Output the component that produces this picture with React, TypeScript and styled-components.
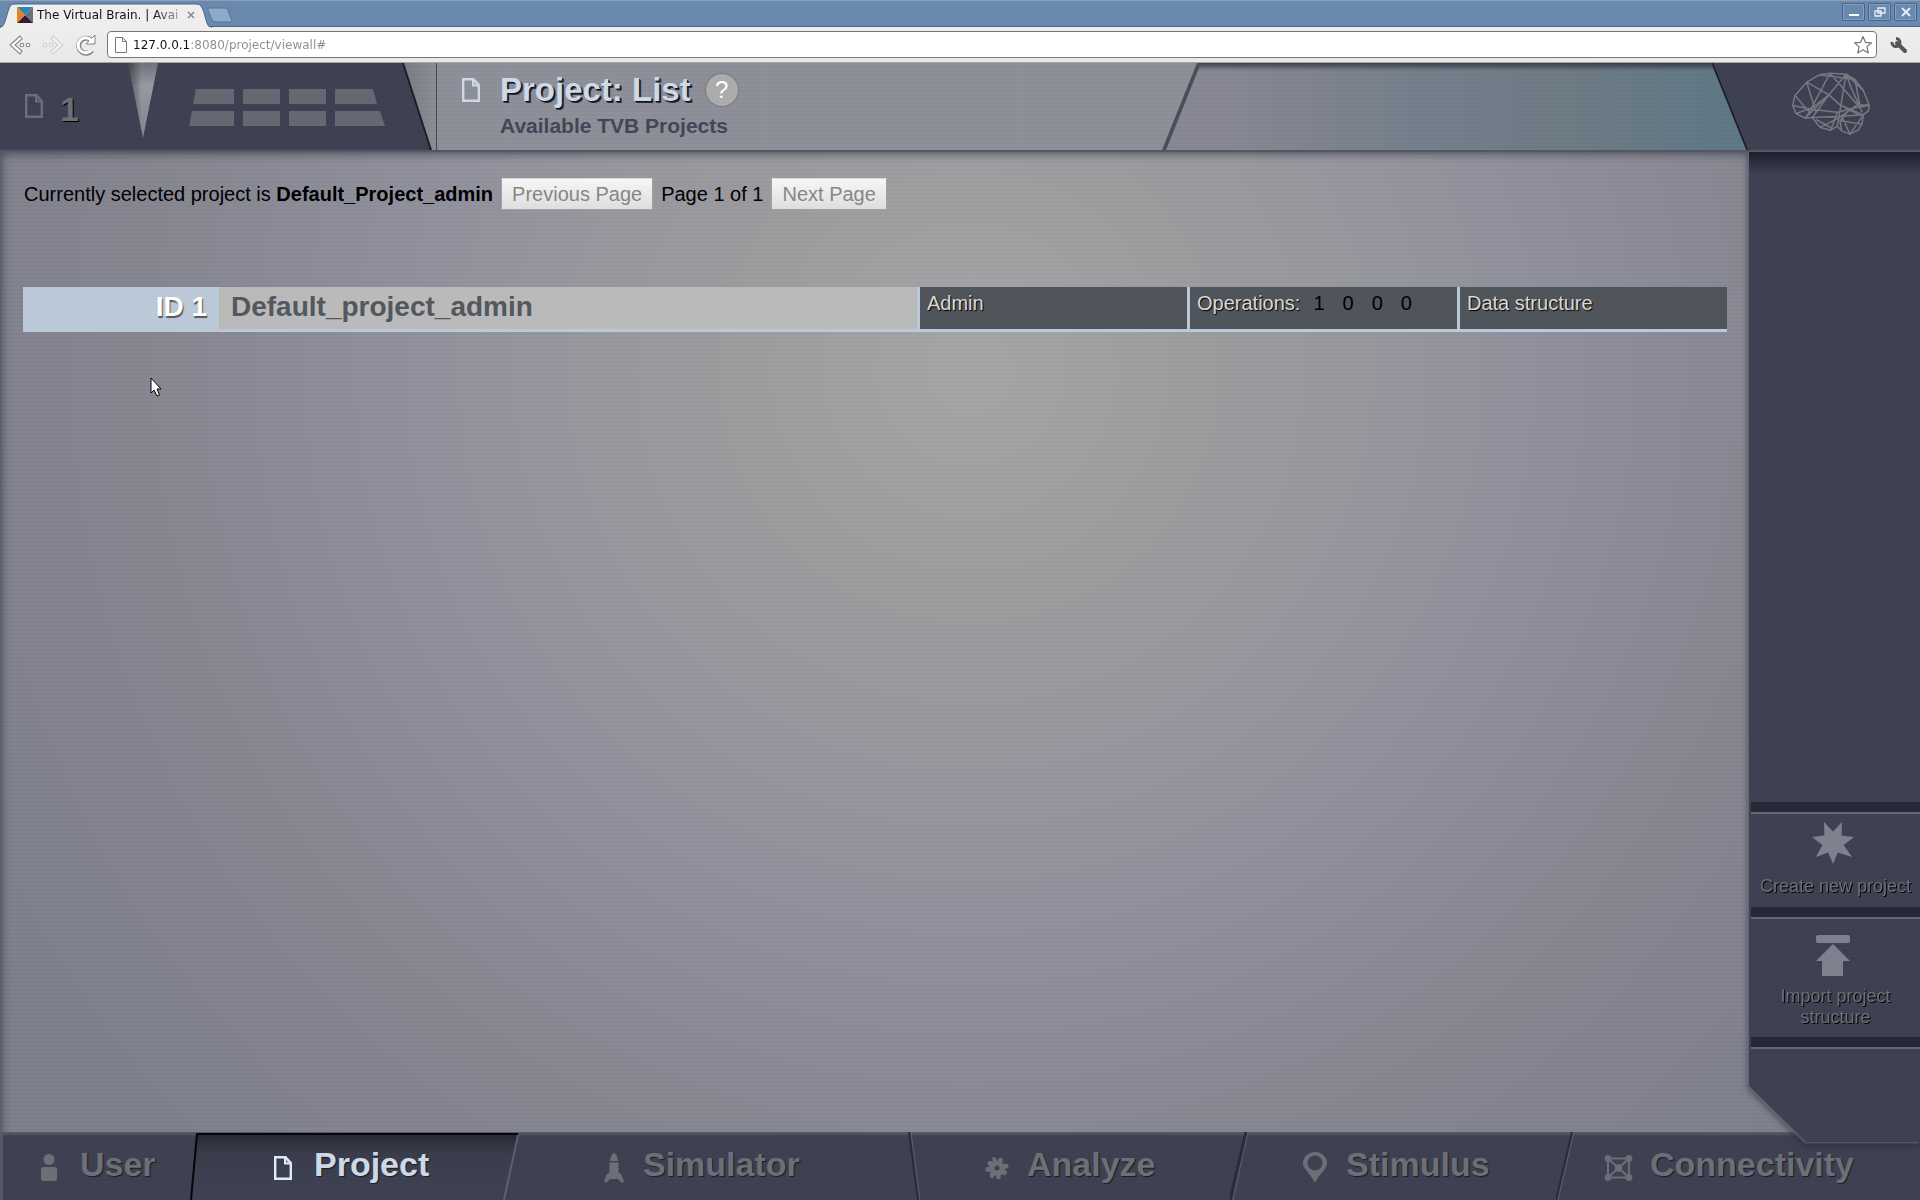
import React from 'react';
import styled, { createGlobalStyle, css } from 'styled-components';

const ink = '#3f4253';
const dim = '#6b6f76';
const pale = '#cdd9e6';

const stripes =
  'repeating-linear-gradient(180deg, rgba(0, 0, 0, 0.04) 0, rgba(0, 0, 0, 0) 2px, rgba(0, 0, 0, 0.04) 4px)';

const GlobalStyle = createGlobalStyle`
  *, *::before, *::after { box-sizing: border-box; }
  body {
    margin: 0;
    font-family: "Liberation Sans", Arial, sans-serif;
    background: ${ink};
  }
  h1, h2, h3, p, ul { margin: 0; padding: 0; }
  ul { list-style: none; }
  button {
    font: inherit;
    color: inherit;
    background: none;
    border: 0;
    padding: 0;
    cursor: pointer;
  }
  a { color: inherit; text-decoration: none; }
`;

const Screen = styled.div`
  display: flex;
  flex-direction: column;
  min-height: 100vh;
  overflow: hidden;
`;

/* ---------- browser frame ---------- */

const TabStrip = styled.div`
  display: flex;
  align-items: flex-start;
  height: 27px;
  padding-top: 2px;
  background: #6a89af;
  border-top: 1px solid #8fa0b6;
  border-bottom: 1px solid #4b6688;
  font-family: "DejaVu Sans", sans-serif;
`;

const Tab = styled.div`
  position: relative;
  display: flex;
  align-items: center;
  gap: 4px;
  width: 212px;
  height: 25px;
  margin-bottom: -1px;
  padding: 0 15px 2px 17px;
  font-size: 12px;
  color: #111;
`;

const TabShape = styled.svg`
  position: absolute;
  inset: 0;
`;

const TabTitle = styled.span`
  position: relative;
  flex: 1;
  white-space: nowrap;
  mask-image: linear-gradient(90deg, #000 80%, rgba(0, 0, 0, 0.3));
`;

const TabIcon = styled.svg`
  position: relative;
  flex: none;
`;

const TabClose = styled.button`
  position: relative;
  display: flex;
  width: 12px;
`;

const NewTab = styled.button`
  margin: 4px 0 0 -5px;
  display: flex;
`;

const WindowButtons = styled.div`
  display: flex;
  gap: 3px;
  margin: 0 3px 0 auto;
`;

const WindowButton = styled.button`
  display: grid;
  place-items: center;
  width: 23px;
  height: 18px;
  border: 1px solid #46648c;
  border-radius: 2px;
  box-shadow: inset 0 0 0 1px #84a0c2;
`;

const Toolbar = styled.div`
  display: flex;
  align-items: center;
  height: 36px;
  padding: 0 12px 0 8px;
  background: linear-gradient(#efeeed, #e9e8e7);
  border-bottom: 1px solid #a5a5a5;
`;

const ToolButton = styled.button`
  display: flex;
  width: 24px;
  margin-right: 9px;
`;

const AddressBar = styled.form`
  display: flex;
  align-items: center;
  gap: 6px;
  flex: 1;
  height: 27px;
  padding: 0 3px 0 7px;
  background: #fff;
  border: 1px solid #77777a;
  border-radius: 4px;
`;

const AddressField = styled.div`
  flex: 1;
  font: 12px/20px "DejaVu Sans", sans-serif;
`;

const AddressText = styled.input`
  display: block;
  width: 100%;
  padding: 0;
  border: 0;
  outline: 0;
  background: linear-gradient(90deg, #111 57px, #8b8b8b 57px);
  background-clip: text;
  -webkit-background-clip: text;
  color: transparent;
  font: inherit;
`;

const WrenchButton = styled.button`
  display: flex;
  margin-left: 13px;
`;

/* ---------- application header ---------- */

const Header = styled.header`
  position: relative;
  z-index: 2;
  display: flex;
  height: 89px;
  background: ${stripes}, ${ink};
  border-bottom: 2px solid #535765;
`;

const CurrentProject = styled.a`
  display: flex;
  align-items: center;
  gap: 17px;
  width: 128px;
  padding: 4px 0 0 25px;
  font: bold 34px/40px "Liberation Sans", Arial, sans-serif;
  color: ${dim};
  text-shadow: 1px 1px 0 #000;

  svg { margin-bottom: 6px; }
`;

const Wedge = styled.div`
  width: 30px;
  height: 75px;
  background: linear-gradient(90deg, rgba(50, 50, 55, 0.7), transparent 45%), linear-gradient(#70717b, #9698a3 30%, #81838d);
  clip-path: polygon(0 0, 100% 0, 50% 100%);
`;

const TileMap = styled.a`
  width: 244px;
  padding: 26px 0 0 30px;
`;

const LightPanel = styled.div`
  flex: 1;
  display: flex;
  background: #1c1d25;
  clip-path: polygon(0 0, calc(100% - 35px) 0, 100% 100%, 28px 100%);
`;

const LightInner = styled.div`
  flex: 1;
  display: flex;
  background: ${stripes}, linear-gradient(90deg, #7b7d86, #8f919b 40px);
  clip-path: polygon(2px 0, calc(100% - 37px) 0, calc(100% - 2px) 100%, 30px 100%);
`;

const TitleBlock = styled.div`
  display: flex;
  flex: 1;
  align-items: flex-start;
  gap: 20px;
  margin-left: 34px;
  padding: 11px 0 0 25px;
  border-left: 1px solid #454858;

  > svg { margin-top: 4px; }
`;

const DocIcon = styled.svg`
  position: relative;
  flex: none;
`;

const TitleRow = styled.div`
  display: flex;
  align-items: center;
  gap: 15px;
`;

const PageTitle = styled.h1`
  font-size: 33px;
  line-height: 32px;
  color: ${pale};
  text-shadow: 1px 1px 0 #111, 2px 2px 0 #2a2d38;
`;

const HelpButton = styled.button`
  width: 32px;
  height: 32px;
  border-radius: 50%;
  background: #acacac;
  box-shadow: 0 0 1px 1px #777a80;
  font-size: 24px;
  line-height: 32px;
  color: #fff;
`;

const Subtitle = styled.p`
  margin-top: 8px;
  font-size: 21px;
  line-height: 24px;
  font-weight: bold;
  color: #434656;
`;

const StatusPane = styled.div`
  width: 586px;
  background: #4b4e56;
  clip-path: polygon(35px 0, 100% 0, 100% 100%, 0 100%);
`;

const StatusGlow = styled.div`
  height: 100%;
  background:
    linear-gradient(rgba(40, 42, 50, 0.75), transparent 8px),
    ${stripes},
    linear-gradient(90deg, #898a95 60px, #80858f 160px, #75818d 260px, #6e7c86 420px, #5f7a88);
  clip-path: polygon(39px 0, 100% 0, 100% 100%, 4px 100%);
`;

const BrainPane = styled.a`
  width: 172px;
  padding: 7px 0 0 42px;
`;

/* ---------- content ---------- */

const Workspace = styled.div`
  flex: 1;
  display: flex;
  margin-top: -2px;
  background:
    ${stripes},
    radial-gradient(1150px 1150px at 970px 220px, #a8a8aa, #9e9ea1 22%, #9393a0 48%, #888893 72%, #7f818e);
`;

const Content = styled.main`
  position: relative;
  flex: 1;
  min-width: 0;
  padding: 28px 22px 0 23px;
  box-shadow: inset 8px 10px 8px -6px rgba(40, 42, 55, 0.6);
`;

const PagerRow = styled.div`
  display: flex;
  align-items: center;
  gap: 8px;
  padding-left: 1px;
  font-size: 20px;
  line-height: 24px;
  color: #000;
`;

const PagerButton = styled.button`
  height: 32px;
  padding: 0 10px;
  border: 1px solid #a2a2a2;
  border-top-color: #d8d8d8;
  background: linear-gradient(#f6f6f6, #dedede);
  color: #868686;
`;

const ProjectRow = styled.div`
  display: grid;
  grid-template-columns: 196px minmax(0, 1fr) 270px 270px 270px;
  height: 45px;
  margin-top: 77px;
  border-bottom: 3px solid #bac8d7;
`;

const ProjectId = styled.div`
  padding: 4px 12px 0 0;
  margin-bottom: -3px;
  background: #bac8d7;
  font-size: 28px;
  line-height: 32px;
  font-weight: bold;
  text-align: right;
  color: #fff;
  text-shadow: 1px 2px 1px #555;
`;

const ProjectName = styled.h2`
  padding: 4px 12px 0;
  background: #bababa;
  font-size: 28px;
  line-height: 32px;
  color: #53575e;
`;

const ProjectCell = styled.div`
  display: flex;
  gap: 13px;
  padding: 4px 0 0 7px;
  border-left: 3px solid #bac8d7;
  background: #50545b;
  font-size: 20px;
  line-height: 24px;
  color: #d8d8d8;
  text-shadow: 1px 1px 1px #000;
`;

const Counts = styled.ul`
  display: flex;
  gap: 18px;
  color: #000;
  text-shadow: none;
`;

const Pointer = styled.svg`
  position: absolute;
  left: 150px;
  top: 227px;
`;

/* ---------- action column ---------- */

const Actions = styled.aside`
  position: relative;
  z-index: 1;
  display: flex;
  flex-direction: column;
  width: 171px;
  margin-bottom: -10px;
  filter: drop-shadow(-1px 1px 1px #666976) drop-shadow(0 2px 3px rgba(20, 20, 30, 0.5));
`;

const ActionsShape = styled.div`
  display: flex;
  flex: 1;
  flex-direction: column;
  justify-content: flex-end;
  padding-bottom: 93px;
  background:
    linear-gradient(rgba(10, 12, 20, 0.7), transparent 24px),
    ${stripes},
    ${ink};
  clip-path: polygon(0 0, 100% 0, 100% 100%, 57px 100%, 0 calc(100% - 56px));
`;

const Action = styled.button<{ $tall?: boolean }>`
  display: flex;
  flex-direction: column;
  align-items: center;
  height: ${(p) => (p.$tall ? 120 : 105)}px;
  margin-left: 2px;
  padding: ${(p) => (p.$tall ? 16 : 8)}px 0 0;
  border-top: 2px solid #646877;
  box-shadow: 0 -10px 0 #252835;
  font-size: 18px;
  line-height: 21px;
  color: ${dim};
  text-shadow: 1px 1px 0 #000;

  svg { margin-right: 5px; }
`;

const ActionLabel = styled.span<{ $gap: number }>`
  margin-top: ${(p) => p.$gap}px;
  padding: 0 8px;
`;

const ActionsEnd = styled.div`
  height: 12px;
  margin-left: 2px;
  background: #252835;
  border-bottom: 2px solid #646877;
`;

/* ---------- bottom navigation ---------- */

const BottomNav = styled.nav`
  display: flex;
  height: 68px;
  background: linear-gradient(#5a5e6c, #4a4d5c 3px, ${ink} 4px);
  border-left: 3px solid #555968;
`;

const NavItem = styled.a<{ $width?: number; $pad: number; $gap: number; $active?: boolean }>`
  position: relative;
  display: flex;
  align-items: center;
  gap: ${(p) => p.$gap}px;
  ${(p) => (p.$width ? css`width: ${p.$width}px;` : css`flex: 1;`)}
  padding: 0 0 4px ${(p) => p.$pad}px;
  background: ${stripes};
  font-size: 34px;
  line-height: 40px;
  font-weight: bold;
  color: ${(p) => (p.$active ? pale : dim)};
  text-shadow: 1px 1px 1px #1a1c24;
`;

const ActivePlate = styled.svg`
  position: absolute;
  left: -7px;
  top: 0;
`;

const Divider = styled.svg<{ $w: number }>`
  position: absolute;
  right: -${(p) => p.$w}px;
  top: 0;
`;

const NavGlyph = styled.span`
  position: relative;
  display: flex;
  flex: none;
  margin-top: 7px;
`;

const NavLabel = styled.span`
  position: relative;
`;

function Page({ color = dim }: { color?: string }) {
  return (
    <DocIcon width="18" height="24" viewBox="0 0 18 24" fill="none" stroke={color} strokeWidth="2.4">
      <path d="M1.2 1.2H11.500L16.800 7V22.800H1.200Z" />
      <path d="M11 1V7.500H17" strokeWidth="2" />
      <path d="M11 1 17 7.500H11Z" fill={color} fillOpacity=".4" stroke="none" />
    </DocIcon>
  );
}

function Brain() {
  return (
    <svg width="82" height="67" viewBox="30 24 246 200" fill="none" stroke="#757980" strokeWidth="4.5" strokeLinejoin="round">
      <path d="M38 130 45 100 80 60 118 38 150 33 198 36 225 52 250 85 268 130 265 146 250 158 246 186 234 204 210 216 185 206 172 192 152 204 120 195 97 166 75 168 48 154Z" />
      <path d="M45 100 88 150 150 33M80 60 147 98 180 128 236 158M80 60 108 150M118 38 225 52M150 33 232 128 268 130M198 36 147 98 75 168M198 36 187 104 172 192M198 36 250 85M198 36 214 78 246 150M225 52 240 132M147 98 97 166M38 130 98 142 172 150 268 126M48 154 98 136 147 98M88 150 75 168M97 166 185 162 250 158M232 128 172 170 120 195M172 150 152 204M180 128 250 158 210 216M185 162 210 216M246 186 180 176M268 130 210 140 180 176 185 206M108 172 152 196" />
    </svg>
  );
}

export default function App() {
  return (
    <Screen>
      <GlobalStyle />
      <TabStrip>
        <Tab>
          <TabShape width="212" height="25" viewBox="0 0 212 25">
            <path d="M0 25C6 24 7 6 11 2Q12 1 16 1H196Q200 1 201 3C206 10 205 24 212 25Z" fill="#efeeed" stroke="#47658c" />
            <path d="M1 25H211" stroke="#efeeed" strokeWidth="2" />
          </TabShape>
          <TabIcon width="16" height="16" viewBox="0 0 16 16">
            <path d="M0 0H16L8 8Z" fill="#2f86ae" />
            <path d="M16 0V16L8 8Z" fill="#5f7485" />
            <path d="M0 16H16L8 8Z" fill="#3c1634" />
            <path d="M0 0V16L8 8Z" fill="#e08327" />
          </TabIcon>
          <TabTitle>The Virtual Brain. | Avai</TabTitle>
          <TabClose aria-label="Close tab">
            <svg width="12" height="8" viewBox="0 0 12 8" stroke="#8c8c8c" strokeWidth="1.6">
              <path d="M3 1l6 6M9 1l-6 6" />
            </svg>
          </TabClose>
        </Tab>
        <NewTab aria-label="New tab">
          <svg width="26" height="16" viewBox="0 0 26 16">
            <path d="M2 1H18Q20 1 21 3L25 14Q25 15 23 15H8Q6 15 5 13L1 3Q0 1 2 1Z" fill="#8fa9cb" stroke="#557299" />
          </svg>
        </NewTab>
        <WindowButtons>
          <WindowButton aria-label="Minimize">
            <svg width="12" height="10"><path d="M1 8h10" stroke="#fff" strokeWidth="2" /></svg>
          </WindowButton>
          <WindowButton aria-label="Restore">
            <svg width="12" height="10" fill="none" stroke="#e8f0fa" strokeWidth="1.3"><path d="M4 1h7v5H4zM1 4h6v5H1z" /></svg>
          </WindowButton>
          <WindowButton aria-label="Close">
            <svg width="12" height="10" stroke="#e8f0fa" strokeWidth="1.8"><path d="M2 1l8 8M10 1L2 9" /></svg>
          </WindowButton>
        </WindowButtons>
      </TabStrip>
      <Toolbar>
        <ToolButton aria-label="Back">
          <svg width="24" height="22" fill="#fff" stroke="#858585" strokeWidth="1.1">
            <path d="M12 2 2 11 12 20 14 17 7 11 14 5Z" />
            <circle cx="14" cy="11" r="1.8" /><circle cx="20" cy="11" r="1.8" />
          </svg>
        </ToolButton>
        <ToolButton aria-label="Forward">
          <svg width="24" height="22" fill="#f4f4f4" stroke="#cfcfcf" strokeWidth="1.1">
            <path d="M12 2 22 11 12 20 10 17 17 11 10 5Z" />
            <circle cx="4" cy="11" r="1.8" /><circle cx="10" cy="11" r="1.8" />
          </svg>
        </ToolButton>
        <ToolButton aria-label="Reload">
          <svg width="24" height="22" fill="none">
            <path d="M18 16.500A7.500 7.500 0 1 1 17 6" stroke="#858585" strokeWidth="5" />
            <path d="M21 1V10H12Z" fill="#fff" stroke="#858585" />
            <path d="M17.500 16A7.500 7.500 0 1 1 17.500 6.500" stroke="#fff" strokeWidth="3" />
          </svg>
        </ToolButton>
        <AddressBar>
          <svg width="12" height="16" fill="#fff" stroke="#777"><path d="M.5 .5H7.500L11.500 4.500V15.500H.5ZM7.500 .5V4.500H11.500" /></svg>
          <AddressField>
            <AddressText aria-label="Address" defaultValue="127.0.0.1:8080/project/viewall#" />
          </AddressField>
          <svg width="20" height="20" viewBox="0 0 20 20" fill="#fff" stroke="#777" strokeWidth="1.2" strokeLinejoin="round">
            <path d="M10 1.500 12.400 7.300 18.500 7.800 13.900 11.900 15.300 18 10 14.800 4.700 18 6.100 11.900 1.500 7.800 7.600 7.300Z" />
          </svg>
        </AddressBar>
        <WrenchButton aria-label="Settings">
          <svg width="18" height="18" viewBox="0 0 18 18" fill="none" stroke="#555">
            <path d="M7 7 15 15" strokeWidth="4" strokeLinecap="round" />
            <path d="M6 2.500A4 4 0 1 1 2 6" strokeWidth="3" />
          </svg>
        </WrenchButton>
      </Toolbar>

      <Header>
        <CurrentProject href="#project">
          <Page />
          <span>1</span>
        </CurrentProject>
        <Wedge />
        <TileMap href="#map" aria-label="Work pages">
          <svg width="200" height="38" viewBox="188 89 200 38" fill="#646870">
            <path d="M196 89H234V104H193ZM243 89H280V104H243ZM289 89H326V104H289ZM335 89H373L377 104H335Z" />
            <path d="M192 111H234V126H189ZM243 111H280V126H243ZM289 111H326V126H289ZM335 111H380L385 126H335Z" />
          </svg>
        </TileMap>
        <LightPanel>
          <LightInner>
            <TitleBlock>
              <Page color={pale} />
              <div>
                <TitleRow>
                  <PageTitle>Project: List</PageTitle>
                  <HelpButton aria-label="Help">?</HelpButton>
                </TitleRow>
                <Subtitle>Available TVB Projects</Subtitle>
              </div>
            </TitleBlock>
            <StatusPane>
              <StatusGlow />
            </StatusPane>
          </LightInner>
        </LightPanel>
        <BrainPane href="#about" aria-label="About">
          <Brain />
        </BrainPane>
      </Header>

      <Workspace>
        <Content>
          <PagerRow>
            <p>Currently selected project is <b>Default_Project_admin</b></p>
            <PagerButton>Previous Page</PagerButton>
            <span>Page 1 of 1</span>
            <PagerButton>Next Page</PagerButton>
          </PagerRow>
          <ProjectRow>
            <ProjectId>ID 1</ProjectId>
            <ProjectName><a href="#p1">Default_project_admin</a></ProjectName>
            <ProjectCell>Admin</ProjectCell>
            <ProjectCell>
              <span>Operations:</span>
              <Counts>
                <li>1</li>
                <li>0</li>
                <li>0</li>
                <li>0</li>
              </Counts>
            </ProjectCell>
            <ProjectCell><a href="#data">Data structure</a></ProjectCell>
          </ProjectRow>
          <Pointer width="12" height="21" viewBox="0 0 12 21">
            <path d="M1 1V16L4 13 7 19 9.500 18 7 12H11Z" fill="#fff" stroke="#000" />
          </Pointer>
        </Content>
        <Actions>
          <ActionsShape>
            <Action>
              <svg width="42" height="42" viewBox="0 0 42 42" fill="#7e818d">
                <path d="M21 42 16.200 30.400 4 35 10.300 23 0 15 12.400 13.600 12 0 21 9.500 30 0 29.600 13.600 42 15 31.700 23 40 35 25.800 30.400Z" />
              </svg>
              <ActionLabel $gap={12}>Create new project</ActionLabel>
            </Action>
            <Action $tall>
              <svg width="34" height="41" viewBox="0 0 34 41" fill="#7e818d">
                <rect width="34" height="8" rx="2" />
                <path d="M17 9 34 26H27V41H6V26H0Z" />
              </svg>
              <ActionLabel $gap={10}>Import project structure</ActionLabel>
            </Action>
            <ActionsEnd />
          </ActionsShape>
        </Actions>
      </Workspace>

      <BottomNav>
        <NavItem href="#user" $width={194} $pad={37} $gap={22}>
          <NavGlyph>
            <svg width="18" height="27" viewBox="0 0 18 27" fill={dim}>
              <circle cx="9" cy="5.500" r="5.500" />
              <rect y="13" x="1" width="16" height="14" rx="2.500" />
            </svg>
          </NavGlyph>
          <NavLabel>User</NavLabel>
        </NavItem>
        <NavItem href="#project" $active $width={313} $pad={77} $gap={22}>
          <ActivePlate width="331" height="68" viewBox="190 0 331 68" fill="none">
            <defs>
              <linearGradient id="plate" x1="0" y1="0" x2="0" y2="1">
                <stop offset="0" stopColor="#26262e" />
                <stop offset=".3" stopColor="#34353f" stopOpacity=".4" />
                <stop offset="1" stopColor="#3f4253" stopOpacity="0" />
              </linearGradient>
            </defs>
            <path d="M197 2H518L504 68H191Z" fill="url(#plate)" />
            <path d="M191 68 197 2H518" stroke="#05050a" strokeWidth="2" />
            <path d="M518 3 504 68" stroke="#5e6270" strokeWidth="2" />
          </ActivePlate>
          <NavGlyph>
            <Page color="#dfeaf5" />
          </NavGlyph>
          <NavLabel>Project</NavLabel>
        </NavItem>
        <NavItem href="#simulator" $width={402} $pad={93} $gap={18}>
          <NavGlyph>
            <svg width="22" height="30" viewBox="0 0 22 30" fill={dim}>
              <path d="M7 7Q8 1 11 0 14 1 15 7V8H7ZM6.500 9.500H15.500V19L18.500 22 21 28.500 19 30 15 26H7L3 30 1 28.500 3.500 22 6.500 19Z" />
            </svg>
          </NavGlyph>
          <NavLabel>Simulator</NavLabel>
          <Divider $w={8} width="14" height="68" fill="none"><path d="M3 0 12 68" stroke="#2a2c38" strokeWidth="2" /><path d="M5 0 14 68" stroke="#5e6270" /></Divider>
        </NavItem>
        <NavItem href="#analyze" $width={330} $pad={73} $gap={18}>
          <NavGlyph>
            <svg width="24" height="24" viewBox="0 0 24 24" fill={dim}>
              <path
                fillRule="evenodd"
                d="M7 1 11 2 12.500 5.500 14.500 1.500 18 2.500 17 7.500 23 8 23.500 12 19.500 13 22.500 16.500 20 19.500 16 18 15.500 23 12 23.500 10.500 19 7.500 22.500 4.500 20.500 5.500 16 .5 15.500 .5 11.500 4.500 10.500 2 7 4.500 4.500 8 6ZM12 9.500A2.500 2.500 0 1 0 12 14.500 2.500 2.500 0 1 0 12 9.500Z"
              />
            </svg>
          </NavGlyph>
          <NavLabel>Analyze</NavLabel>
          <Divider $w={6} width="18" height="68" fill="none"><path d="M16 0 0 68" stroke="#2a2c38" strokeWidth="3" /><path d="M18 0 3 68" stroke="#5e6270" /></Divider>
        </NavItem>
        <NavItem href="#stimulus" $width={327} $pad={60} $gap={18}>
          <NavGlyph>
            <svg width="26" height="31" viewBox="0 0 26 31" fill={dim}>
              <path
                fillRule="evenodd"
                d="M13 0C20 0 25 5 25 11 25 17 18 21 13 31 8 21 1 17 1 11 1 5 6 0 13 0ZM13 3.500A7.500 7.500 0 1 0 13 18.500 7.500 7.500 0 1 0 13 3.500Z"
              />
            </svg>
          </NavGlyph>
          <NavLabel>Stimulus</NavLabel>
          <Divider $w={5} width="18" height="68" fill="none"><path d="M16 0 0 68" stroke="#2a2c38" strokeWidth="2" /><path d="M18 0 2 68" stroke="#5e6270" /></Divider>
        </NavItem>
        <NavItem href="#connectivity" $pad={35} $gap={17}>
          <NavGlyph>
            <svg width="29" height="26" viewBox="0 0 29 26" fill={dim} stroke={dim}>
              <path d="M4 3.500H25V22.500H4ZM4 3.500 25 22.500M25 3.500 4 22.500" fill="none" strokeWidth="2" />
              <circle cx="4" cy="3.500" r="3" /><circle cx="25" cy="3.500" r="3" />
              <circle cx="4" cy="22.500" r="3" /><circle cx="25" cy="22.500" r="3" />
              <circle cx="14.500" cy="13" r="3.500" />
            </svg>
          </NavGlyph>
          <NavLabel>Connectivity</NavLabel>
        </NavItem>
      </BottomNav>
    </Screen>
  );
}
